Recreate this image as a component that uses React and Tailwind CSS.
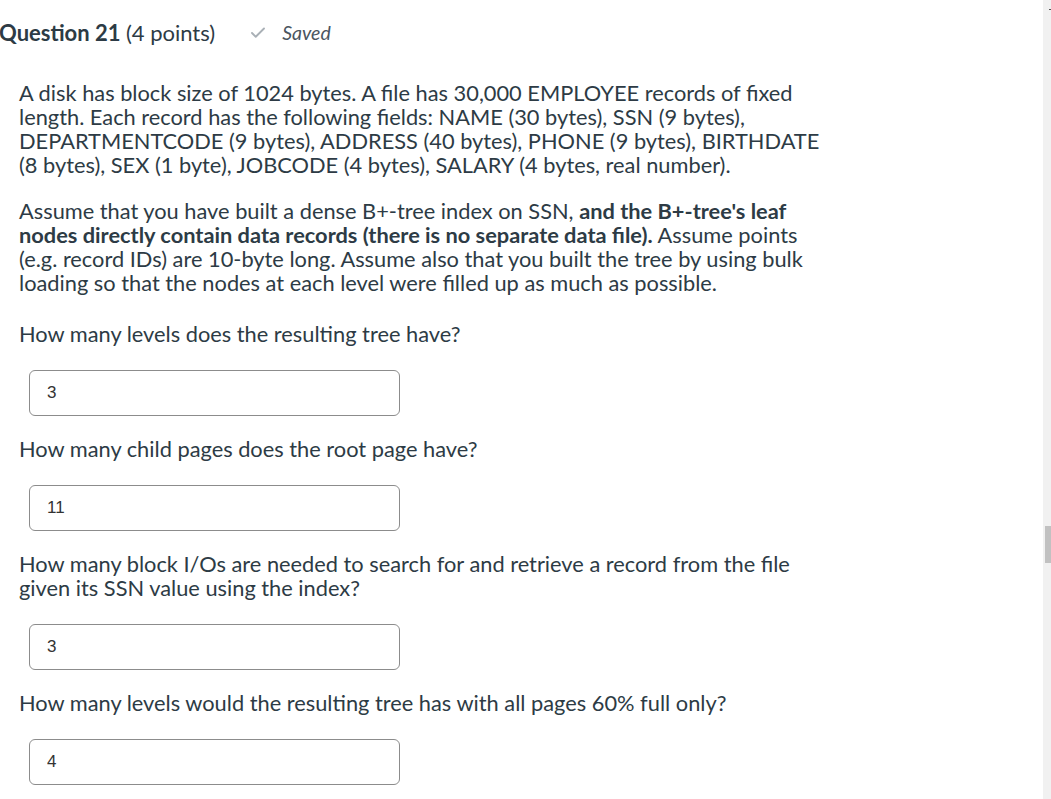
import { Check } from "lucide-react";

function Answer({ value }) {
  return (
    <div className="ml-[10px] mt-[24px] mb-[21px] w-[371px] h-[46px] border border-[#8c8c8c] rounded-[6px] flex items-center pl-[17px] bg-white">
      <input
        readOnly
        value={value}
        className="w-full outline-none bg-transparent text-[17px] text-[#333] font-['Liberation_Sans',Arial,sans-serif]"
      />
    </div>
  );
}

export default function App() {
  return (
    <div className="flex h-[799px] w-[1051px] overflow-hidden bg-white text-[#2d3b45] font-['Lato','Noto_Sans',sans-serif]">
      <div className="flex-1 relative">
        <div className="flex items-center h-[24px] mt-[21px] -ml-[1px]">
          <h2 className="text-[22px] font-bold leading-none">
            Question 21 <span className="font-normal">(4 points)</span>
          </h2>
          <Check className="ml-[34px] w-[18px] h-[18px] text-[#a9b0b6]" strokeWidth={2.5} />
          <span className="ml-[15px] text-[19.5px] italic text-[#4a5560]">Saved</span>
        </div>

        <div className="pl-[19px] w-[828px] mt-[36px] text-[21.8px] leading-[24px]">
          <p>
            A disk has block size of 1024 bytes. A file has 30,000 EMPLOYEE records of fixed
            length. Each record has the following fields: NAME (30 bytes), SSN (9 bytes),
            DEPARTMENTCODE (9 bytes), ADDRESS (40 bytes), PHONE (9 bytes), BIRTHDATE
            (8 bytes), SEX (1 byte), JOBCODE (4 bytes), SALARY (4 bytes, real number).
          </p>
          <p className="mt-[22px]">
            Assume that you have built a dense B+-tree index on SSN,{" "}
            <strong className="font-bold">
              and the B+-tree's leaf nodes directly contain data records (there is no separate data file).
            </strong>{" "}
            Assume points (e.g. record IDs) are 10-byte long. Assume also that you built the tree by
            using bulk loading so that the nodes at each level were filled up as much as possible.
          </p>
          <p className="mt-[27px]">How many levels does the resulting tree have?</p>
          <Answer value="3" />
          <p>How many child pages does the root page have?</p>
          <Answer value="11" />
          <p>
            How many block I/Os are needed to search for and retrieve a record from the file given its SSN
            value using the index?
          </p>
          <Answer value="3" />
          <p>How many levels would the resulting tree has with all pages 60% full only?</p>
          <Answer value="4" />
        </div>
      </div>
      <div className="w-[8px] bg-[#f1f1f1] relative">
        <div className="absolute top-[9px] right-0 w-[2px] h-[1px] bg-[#555]" />
        <div className="absolute top-[526px] left-[2px] right-0 h-[37px] bg-[#c1c1c1]" />
      </div>
    </div>
  );
}
